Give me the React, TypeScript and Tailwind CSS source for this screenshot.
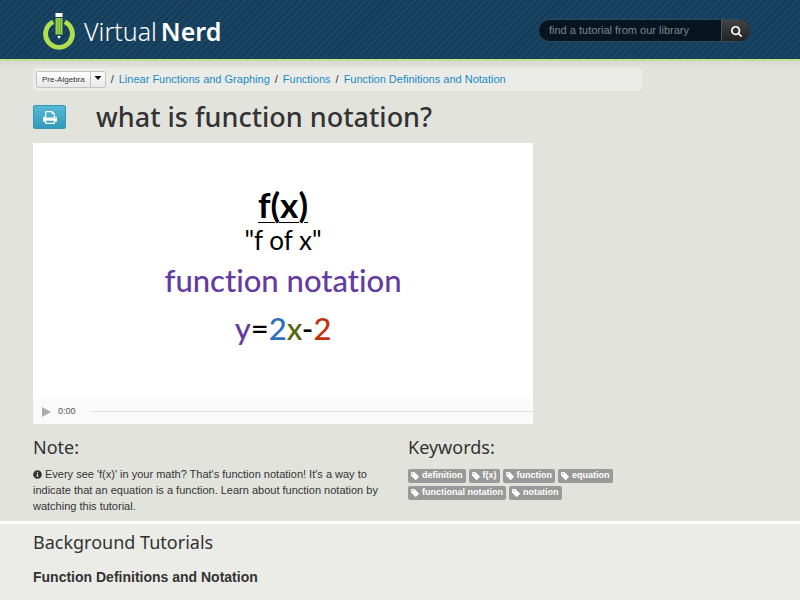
import { FaInfoCircle } from "react-icons/fa";

const crumbs = [
  "Linear Functions and Graphing",
  "Functions",
  "Function Definitions and Notation",
];

const keywords = [
  "definition",
  "f(x)",
  "function",
  "equation",
  "functional notation",
  "notation",
];

function Logo() {
  return (
    <a href="#" className="flex items-center gap-2 text-white">
      <svg viewBox="0 0 34 40" className="h-10 w-[34px]" aria-hidden="true">
        <path
          d="M11.2 10.8A13.4 13.4 0 1 0 22.8 10.8"
          fill="none"
          stroke="#b0e04f"
          strokeWidth="4.800"
        />
        <path d="M13.500 2h7v4h-7z" fill="#fff" />
        <path d="M13.500 7h7v16.500h-7z" fill="#9fd14a" />
        <path d="M16 7.500v16M18.500 7.500v16" stroke="#5f9a3c" strokeWidth="0.8" />
        <path d="M15.200 25h3.600L17 28z" fill="#fff" />
      </svg>
      <span className="font-['Noto_Sans',sans-serif] text-[25px] leading-8 font-light">
        Virtual<span className="ml-1 font-semibold">Nerd</span>
      </span>
    </a>
  );
}

function SearchIcon() {
  return (
    <svg viewBox="0 0 1664 1792" className="h-3 w-[11px]" fill="currentColor" aria-hidden="true">
      <path d="M1152 832q0-185-131.5-316.5t-316.5-131.5-316.5 131.5-131.5 316.5 131.5 316.5 316.5 131.5 316.5-131.5 131.5-316.5zM1664 1664q0 52-38 90t-90 38q-54 0-90-38l-343-342q-179 124-399 124-143 0-273.5-55.5t-225-150-150-225-55.5-273.5 55.5-273.5 150-225 225-150 273.5-55.5 273.5 55.5 225 150 150 225 55.5 273.5q0 220-124 399l343 343q37 37 37 90z" />
    </svg>
  );
}

function PrintIcon() {
  return (
    <svg viewBox="0 0 1664 1792" className="h-[15px] w-[14px]" fill="currentColor" aria-hidden="true">
      <path d="M384 1536h896v-256h-896v256zM384 896h896v-384h-160q-40 0-68-28t-28-68v-160h-640v640zM1536 960q0-26-19-45t-45-19-45 19-19 45 19 45 45 19 45-19 19-45zM1664 960v416q0 13-9.5 22.5t-22.5 9.5h-224v160q0 40-28 68t-68 28h-960q-40 0-68-28t-28-68v-160h-224q-13 0-22.5-9.5t-9.5-22.5v-416q0-79 56.5-135.5t135.5-56.5h64v-544q0-40 28-68t68-28h672q40 0 88 20t76 48l152 152q28 28 48 76t20 88v256h64q79 0 135.5 56.5t56.5 135.5z" />
    </svg>
  );
}

function TagIcon() {
  return (
    <svg viewBox="0 128 1536 1536" className="size-2" fill="currentColor" aria-hidden="true">
      <path d="M448 448q0-53-37.5-90.5t-90.5-37.5-90.5 37.5-37.5 90.5 37.5 90.5 90.5 37.5 90.5-37.5 37.5-90.5zM1515 1024q0 53-37 90l-491 492q-39 37-91 37-53 0-90-37l-715-716q-38-37-64.5-101t-26.5-117v-416q0-52 38-90t90-38h416q53 0 117 26.5t102 64.5l715 714q37 39 37 91z" />
    </svg>
  );
}

function Header() {
  return (
    <header className="flex h-[61px] items-center justify-between border-b-2 border-[#c5e28c] bg-[#174261] bg-[repeating-linear-gradient(135deg,#153c59_0px,#153c59_2px,#1a4665_3px,#1a4665_5px)] pt-[2px] pr-[49px] pl-[42px]">
      <Logo />
      <form className="flex h-[23px] w-[213px] overflow-hidden rounded-full border border-[#2c4a5e] bg-[#071521]">
        <input
          type="text"
          aria-label="Search tutorials"
          placeholder="find a tutorial from our library"
          className="min-w-0 flex-1 pl-[10px] text-[11px] text-white outline-none placeholder:text-[#7d858b]"
        />
        <button
          type="button"
          aria-label="Search"
          className="flex w-[29px] items-center justify-center border-l border-[#555] bg-linear-to-b from-[#444] to-[#222] text-white"
        >
          <SearchIcon />
        </button>
      </form>
    </header>
  );
}

function Breadcrumb() {
  return (
    <nav className="flex h-[23px] max-w-[609px] items-center rounded-sm bg-[#ebece7] pl-[3px] text-[11px] whitespace-nowrap">
      <div className="flex h-[17px] rounded-xs border border-[#c4c4c4] bg-linear-to-b from-white to-[#e8e8e8] text-[8px] text-[#333]">
        <button type="button" className="px-[5px]">
          Pre-Algebra
        </button>
        <button
          type="button"
          aria-label="Choose subject"
          className="flex w-[15px] items-center justify-center border-l border-[#c4c4c4]"
        >
          <svg viewBox="0 0 8 4" className="mb-1 h-1 w-2" aria-hidden="true">
            <path d="M0.500 0h7L4 4z" fill="#111" />
          </svg>
        </button>
      </div>
      {crumbs.map((crumb) => (
        <span key={crumb} className="flex">
          <span className="px-[5px]">/</span>
          <a href="#" className="text-[#1a8ac4]">
            {crumb}
          </a>
        </span>
      ))}
    </nav>
  );
}

function Video() {
  return (
    <section className="flex h-[281px] max-w-[500px] flex-col bg-white">
      <div className="flex flex-1 flex-col items-center pt-[41px] font-[Lato,'Noto_Sans',sans-serif] text-black [font-variant-ligatures:none]">
        <p className="text-[35px] leading-10 font-bold underline decoration-1 underline-offset-4">f(x)</p>
        <p className="mt-1 text-[26px] leading-6">"f of x"</p>
        <p className="mt-2 text-[31px] leading-10 font-medium text-[#633ba3]">function notation</p>
        <p className="mt-2 text-[31px] leading-10 font-medium">
          <span className="text-[#633ba3]">y</span>=
          <span className="text-[#2d6fc0]">2</span>
          <span className="text-[#57660d]">x</span>-
          <span className="text-[#bf320f]">2</span>
        </p>
      </div>
      <div className="flex h-[25px] items-center bg-[#fafafa] pl-[9px]">
        <button type="button" aria-label="Play">
          <svg viewBox="0 0 9 10" className="h-[10px] w-[9px]" aria-hidden="true">
            <path d="M0 0l9 5-9 5z" fill="#acacac" />
          </svg>
        </button>
        <span className="w-[39px] pl-[7px] text-[9px] text-[#555]">0:00</span>
        <div className="h-px flex-1 bg-[#e2e2e2]" />
      </div>
    </section>
  );
}

export default function App() {
  return (
    <div className="min-h-screen bg-[#ebece7] font-['Liberation_Sans',Arial,sans-serif] text-[#333]">
      <Header />

      <main className="border-b-3 border-white bg-[#e2e3dd] bg-[linear-gradient(to_bottom,#d8d9d4_0px,#e2e3dd_6px)] px-[33px] pt-[7px] pb-[7px]">
        <Breadcrumb />

        <div className="flex h-[52px] items-center">
          <button
            type="button"
            aria-label="Print"
            className="flex h-6 w-[33px] items-center justify-center rounded-xs border border-[#3a95b1] bg-linear-to-b from-[#55b9d5] to-[#319ab9] text-white"
          >
            <PrintIcon />
          </button>
          <h1 className="ml-[30px] font-['Noto_Sans',sans-serif] text-[27px] leading-9 font-medium">
            what is function notation?
          </h1>
        </div>

        <Video />

        <div className="flex pt-2">
          <section className="w-[375px] pr-4">
            <h2 className="font-['Noto_Sans',sans-serif] text-[18px] leading-[30px]">Note:</h2>
            <p className="mt-1 text-[11px] leading-4">
              <FaInfoCircle className="mr-[3px] mb-[2px] inline size-[9px]" />
              Every see 'f(x)' in your math? That's function notation! It's a way to indicate that an
              equation is a function. Learn about function notation by watching this tutorial.
            </p>
          </section>

          <section>
            <h2 className="font-['Noto_Sans',sans-serif] text-[18px] leading-[30px]">Keywords:</h2>
            <ul className="mt-[7px] flex max-w-[230px] flex-wrap gap-[3px]">
              {keywords.map((word) => (
                <li
                  key={word}
                  className="flex h-[14px] items-center gap-[3px] rounded-xs bg-[#999] px-[3px] text-[9px] font-bold text-white"
                >
                  <TagIcon />
                  {word}
                </li>
              ))}
            </ul>
          </section>
        </div>
      </main>

      <section className="px-[33px] pt-[3px]">
        <h2 className="font-['Noto_Sans',sans-serif] text-[18px] leading-[30px]">Background Tutorials</h2>
        <h3 className="mt-[10px] text-[14px] leading-5 font-bold">Function Definitions and Notation</h3>
      </section>
    </div>
  );
}
